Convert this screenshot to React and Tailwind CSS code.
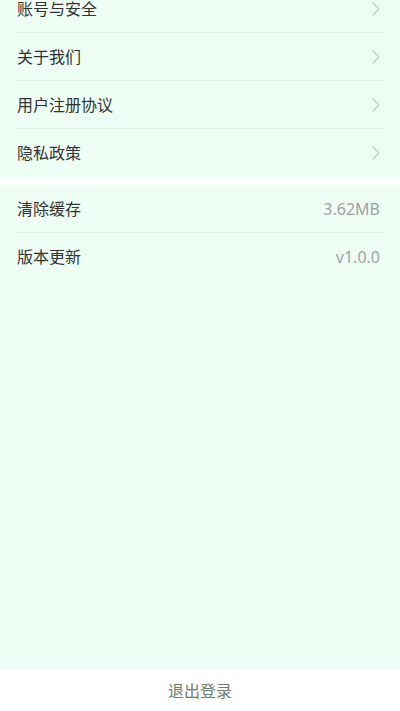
import React from "react";

const Chevron = () => (
  <svg width="8" height="14" viewBox="0 0 8 14" fill="none" className="shrink-0">
    <path d="M1 1l6 6-6 6" stroke="#c4c9c6" strokeWidth="1.2" strokeLinecap="round" strokeLinejoin="round" />
  </svg>
);

const Row = ({ label, value, last }) => (
  <div className="mx-4">
    <div className={"flex h-12 items-center justify-between pl-px pr-1 " + (last ? "" : "border-b border-[#e3eee7]")}>
      <span className="text-base text-[#333333]">{label}</span>
      {value ? <span className="text-base text-[#a0a3a1]">{value}</span> : <Chevron />}
    </div>
  </div>
);

const App = () => {
  return (
    <div
      className="flex h-[711px] w-full flex-col overflow-hidden bg-white"
      style={{ fontFamily: '"Noto Sans", "Noto Sans CJK SC", sans-serif' }}
    >
      <div className="-mt-[15px] bg-[#effef4]">
        <Row label="账号与安全" />
        <Row label="关于我们" />
        <Row label="用户注册协议" />
        <Row label="隐私政策" last />
      </div>
      <div className="h-2 bg-white" />
      <div className="flex-1 bg-[#effef4]">
        <Row label="清除缓存" value="3.62MB" />
        <Row label="版本更新" value="v1.0.0" last />
      </div>
      <div className="flex h-[41px] items-center justify-center bg-white">
        <span className="text-base text-[#6f7d74]">退出登录</span>
      </div>
    </div>
  );
};

export default App;
